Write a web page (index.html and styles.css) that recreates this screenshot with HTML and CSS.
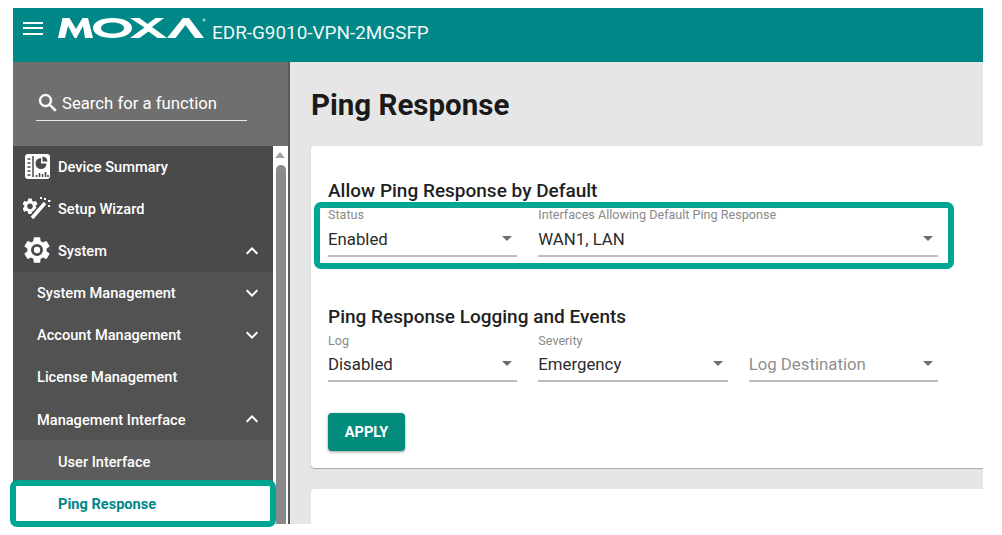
FILE: index.html
```html
<!DOCTYPE html>
<html lang="en">
<head>
<meta charset="utf-8">
<title>Ping Response</title>
<link rel="stylesheet" href="styles.css">
</head>
<body>
<div class="app">
  <header class="topbar">
    <svg class="menu-icon" width="20" height="13" viewBox="0 0 20 13"><path d="M0 0h20v2H0zM0 5h20v2H0zM0 11h20v2H0z" fill="#fff"/></svg>
    <svg class="logo" width="150" height="24" viewBox="0 0 150 24" role="img" aria-label="MOXA">
      <g fill="#fff">
        <path d="M0 21 4.500 1h7L18 12l6.500-11H30l5 20h-8L25 9l-6.500 12h-2L10 9 7 21z"/>
        <path fill-rule="evenodd" d="M54.500 1C66 1 74 5 74 11s-8 10-19.500 10S35 17 35 11 43 1 54.500 1zm0 4.500C47 5.500 43 8 43 11s4 5.500 11.500 5.500S66 14 66 11s-4-5.500-11.500-5.500z"/>
        <path d="M72 1h9.500l8 6 8-6h8.500L94 10l15 11h-9.500l-9-6.500-9 6.500H72l14.500-10.500z"/>
        <path d="M109 21 125 1h6l15 20h-9L127.500 8 117.500 21z"/>
        <circle cx="146" cy="3" r="1.500" opacity=".6"/>
      </g>
    </svg>
    <span class="model">EDR-G9010-VPN-2MGSFP</span>
  </header>
  <div class="workspace">
    <aside class="sidebar">
      <div class="search-zone">
        <div class="search">
          <svg width="24" height="24" viewBox="0 0 24 24"><path fill="#fff" stroke="#fff" stroke-width=".4" d="M15.500 14h-.79l-.28-.27A6.470 6.470 0 0 0 16 9.500 6.500 6.500 0 1 0 9.500 16c1.610 0 3.090-.59 4.230-1.570l.27.28v.79l5 4.990L20.490 19l-4.990-5zm-6 0C7.010 14 5 11.990 5 9.500S7.010 5 9.500 5 14 7.010 14 9.500 11.990 14 9.500 14z"/></svg>
          <span>Search for a function</span>
        </div>
      </div>
      <div class="menu-wrap">
        <nav class="menu">
          <a class="row lvl1">
            <svg class="row-icon" width="28" height="28" viewBox="0 0 28 28"><rect x="2" y="1" width="25" height="25" rx="3" fill="#fff"/><path d="M10 3v21" stroke="#4a4a4a" stroke-width="1.500"/><path d="M4.500 6h3M4.500 10h3M4.500 14h3M4.500 18h3M4.500 22h3" stroke="#4a4a4a" stroke-width="1.500"/><path d="M18 5a5.500 5.500 0 1 0 5.500 5.500H18z" fill="#4a4a4a"/><path d="M19.500 3.500a5.500 5.500 0 0 1 5 5h-5z" fill="#4a4a4a"/><path d="M13.500 24v-2M16.500 24v-4M19.500 24v-3M22.500 24v-5M25 24v-2" stroke="#4a4a4a" stroke-width="1.600"/></svg>
            <span>Device Summary</span>
          </a>
          <a class="row lvl1">
            <svg class="row-icon" width="28" height="28" viewBox="0 0 28 28">
              <g transform="translate(-2.600 1.700) scale(.8)"><path fill="#fff" d="M19.140 12.940c.04-.3.060-.61.060-.94 0-.32-.02-.64-.07-.94l2.030-1.580a.49.49 0 0 0 .12-.61l-1.920-3.320a.488.488 0 0 0-.59-.22l-2.390.96c-.5-.38-1.030-.7-1.620-.94l-.36-2.540a.484.484 0 0 0-.48-.41h-3.840c-.24 0-.43.170-.47.410l-.36 2.540c-.59.24-1.130.57-1.620.94l-2.390-.96c-.22-.08-.47 0-.59.220L2.740 8.870c-.12.210-.08.470.12.610l2.030 1.580c-.05.3-.09.630-.09.940s.02.640.07.940l-2.030 1.580a.49.49 0 0 0-.12.610l1.920 3.320c.12.220.37.290.59.220l2.390-.96c.5.380 1.030.7 1.620.94l.36 2.540c.05.240.24.410.48.410h3.840c.24 0 .44-.17.470-.41l.36-2.540c.59-.24 1.130-.56 1.620-.94l2.390.96c.22.080.47 0 .59-.22l1.920-3.320c.12-.22.070-.47-.12-.61l-2.010-1.580zM12 15.600c-1.980 0-3.600-1.620-3.600-3.600s1.620-3.600 3.600-3.600 3.600 1.620 3.600 3.600-1.620 3.600-3.600 3.600z"/></g>
              <path d="M9 23 22 8" stroke="#4a4a4a" stroke-width="6.500"/>
              <path d="M9 23 22 8" stroke="#fff" stroke-width="3.500"/>
              <g fill="#fff"><rect x="21" y="3" width="2" height="2"/><rect x="25" y="5" width="2.500" height="2"/><rect x="25" y="10" width="2" height="2"/><rect x="17" y="2" width="2" height="2"/></g>
            </svg>
            <span>Setup Wizard</span>
          </a>
          <a class="row lvl1">
            <svg class="row-icon gear" width="32" height="32" viewBox="0 0 24 24"><path fill="#fff" fill-rule="evenodd" d="M19.140 12.940c.04-.3.060-.61.060-.94 0-.32-.02-.64-.07-.94l2.030-1.580a.49.49 0 0 0 .12-.61l-1.920-3.320a.488.488 0 0 0-.59-.22l-2.390.96c-.5-.38-1.030-.7-1.620-.94l-.36-2.540a.484.484 0 0 0-.48-.41h-3.840c-.24 0-.43.170-.47.410l-.36 2.540c-.59.24-1.130.57-1.620.94l-2.390-.96c-.22-.08-.47 0-.59.220L2.740 8.870c-.12.210-.08.470.12.610l2.030 1.580c-.05.3-.09.630-.09.940s.02.640.07.940l-2.030 1.580a.49.49 0 0 0-.12.610l1.920 3.320c.12.220.37.290.59.220l2.390-.96c.5.380 1.030.7 1.620.94l.36 2.540c.05.240.24.410.48.410h3.840c.24 0 .44-.17.470-.41l.36-2.540c.59-.24 1.130-.56 1.620-.94l2.390.96c.22.080.47 0 .59-.22l1.920-3.320c.12-.22.070-.47-.12-.61l-2.010-1.580zM12 16.500a4.500 4.500 0 1 1 0-9 4.500 4.500 0 0 1 0 9z"/><circle cx="12" cy="12" r="2.400" fill="#fff"/></svg>
            <span>System</span>
            <svg class="chev" width="24" height="24" viewBox="0 0 24 24"><path fill="#fff" d="m12 8-6 6 1.410 1.410L12 10.830l4.590 4.580L18 14z"/></svg>
          </a>
          <a class="row lvl2"><span>System Management</span><svg class="chev" width="24" height="24" viewBox="0 0 24 24"><path fill="#fff" d="M16.590 8.590 12 13.170 7.410 8.590 6 10l6 6 6-6z"/></svg></a>
          <a class="row lvl2"><span>Account Management</span><svg class="chev" width="24" height="24" viewBox="0 0 24 24"><path fill="#fff" d="M16.590 8.590 12 13.170 7.410 8.590 6 10l6 6 6-6z"/></svg></a>
          <a class="row lvl2"><span>License Management</span></a>
          <a class="row lvl2 low"><span>Management Interface</span><svg class="chev" width="24" height="24" viewBox="0 0 24 24"><path fill="#fff" d="m12 8-6 6 1.410 1.410L12 10.830l4.590 4.580L18 14z"/></svg></a>
          <a class="row lvl3 low"><span>User Interface</span></a>
          <a class="row lvl3 low active"><span>Ping Response</span></a>
        </nav>
        <div class="scrollbar">
          <span class="scroll-up"></span>
          <span class="scroll-thumb"></span>
        </div>
      </div>
    </aside>
    <main class="content">
      <h1 class="title">Ping Response</h1>
      <section class="card main-card">
        <h2 class="section-title">Allow Ping Response by Default</h2>
        <div class="fields">
          <div class="field"><label>Status</label><div class="value"><span>Enabled</span><i class="caret"></i></div></div>
          <div class="field span2"><label>Interfaces Allowing Default Ping Response</label><div class="value"><span>WAN1, LAN</span><i class="caret"></i></div></div>
        </div>
        <h2 class="section-title second">Ping Response Logging and Events</h2>
        <div class="fields">
          <div class="field"><label>Log</label><div class="value"><span>Disabled</span><i class="caret"></i></div></div>
          <div class="field"><label>Severity</label><div class="value"><span>Emergency</span><i class="caret"></i></div></div>
          <div class="field nolabel"><label>&nbsp;</label><div class="value muted"><span>Log Destination</span><i class="caret"></i></div></div>
        </div>
        <button class="apply" type="button">APPLY</button>
      </section>
      <section class="card next-card"></section>
    </main>
  </div>
</div>
<div class="mark mark-nav"></div>
<div class="mark mark-fields"></div>
</body>
</html>
```
FILE: styles.css
```css
* { box-sizing: border-box; }
html, body { margin: 0; height: 100%; background: #fff; }
body {
  padding: 8px 19px 11px 13px;
  font-family: Roboto, "Liberation Sans", sans-serif;
  position: relative;
  overflow: hidden;
}
.app { height: 516px; display: flex; flex-direction: column; overflow: hidden; }

.topbar {
  height: 54px;
  flex: none;
  background: #008787;
  display: flex;
  align-items: flex-start;
  color: #f2f7f7;
}
.menu-icon { margin: 14px 0 0 10px; flex: none; }
.logo { margin: 9px 0 0 15px; flex: none; }
.model { font-size: 18.900px; line-height: 24px; margin: 13px 0 0 4px; }

.workspace { flex: 1; display: flex; min-height: 0; }
.sidebar {
  width: 277px;
  flex: none;
  display: flex;
  flex-direction: column;
  border-right: 2px solid #5a5a5a;
}
.search-zone {
  height: 84px;
  flex: none;
  background: #6f6f6f;
  padding: 28px 0 0 23px;
}
.search {
  width: 211px;
  height: 31px;
  border-bottom: 1px solid #e8e8e8;
  display: flex;
  align-items: center;
  color: #fff;
  font-size: 16.700px;
  padding: 0 0 4px 0;
}
.search svg { flex: none; margin-right: 2px; }

.menu-wrap { flex: 1; display: flex; min-height: 0; }
.menu { width: 260px; flex: none; background: #4a4a4a; }
.row {
  height: 42px;
  display: flex;
  align-items: center;
  color: #fff;
  font-size: 14.600px;
  font-weight: 500;
  position: relative;
}
.row.low { padding-top: 1px; }
.row-icon { position: absolute; left: 10px; top: 7px; }
.row-icon.gear { left: 8px; top: 4px; }
.lvl1 { padding-left: 45px; background: #4a4a4a; }
.lvl2 { padding-left: 24px; background: #525252; }
.lvl3 { padding-left: 45px; background: #5c5c5c; }
.row.active { background: #fff; color: #008787; font-weight: 700; }
.chev { position: absolute; right: 9px; top: 9px; }

.scrollbar { flex: 1; background: #fff; position: relative; }
.scroll-up {
  position: absolute; left: 2px; top: 6px;
  width: 0; height: 0;
  border-left: 5px solid transparent;
  border-right: 5px solid transparent;
  border-bottom: 6px solid #a3a3a3;
}
.scroll-thumb {
  position: absolute; left: 3px; top: 19px; bottom: 0;
  width: 10px;
  background: #8a8a8a;
  border-radius: 5px 5px 0 0;
}

.content { flex: 1; min-width: 0; background: #e6e6e6; padding: 0 0 0 21px; overflow: hidden; }
.title { margin: 0; height: 84px; padding-top: 25px; font-size: 29.500px; line-height: 36px; font-weight: 700; color: #1a1a1a; }
.card { background: #fff; border-radius: 4px 0 0 4px; }
.main-card {
  height: 322px;
  padding: 34px 45px 0 17px;
  box-shadow: 0 1px 1px #a8a8a8;
}
.next-card { height: 40px; margin-top: 21px; }
.section-title { margin: 0; font-size: 19px; line-height: 22px; font-weight: 500; color: #1f1f1f; }
.section-title.second { margin-top: 49px; }
.fields { display: grid; grid-template-columns: repeat(3, 1fr); column-gap: 21px; }
.span2 { grid-column: span 2; }
.field label { display: block; font-size: 12.600px; line-height: 14px; color: #8a8a8a; margin-top: 6px; }
.value {
  height: 31px;
  margin-top: 4px;
  border-bottom: 2px solid #bdbdbd;
  display: flex;
  align-items: center;
  justify-content: space-between;
  font-size: 16.800px;
  color: #2b2b2b;
  padding: 0 5px 4px 0;
}
.second + .fields .value { margin-top: 3px; }
.value.muted { color: #8f8f8f; }
.caret {
  width: 0; height: 0;
  border-left: 5px solid transparent;
  border-right: 5px solid transparent;
  border-top: 5px solid #6e6e6e;
}
.apply {
  display: block;
  margin-top: 31px;
  width: 77px;
  height: 38px;
  background: #008b7a;
  border: 0;
  border-radius: 4px;
  color: #fff;
  font-family: inherit;
  font-size: 14.500px;
  font-weight: 700;
  box-shadow: 0 1px 3px rgba(0,0,0,.4);
}

.mark { position: absolute; border: 6px solid #00a593; border-radius: 7px; pointer-events: none; }
.mark-nav { left: 10px; top: 480px; width: 266px; height: 47px; }
.mark-fields { left: 314px; top: 202px; width: 640px; height: 67px; }
```
